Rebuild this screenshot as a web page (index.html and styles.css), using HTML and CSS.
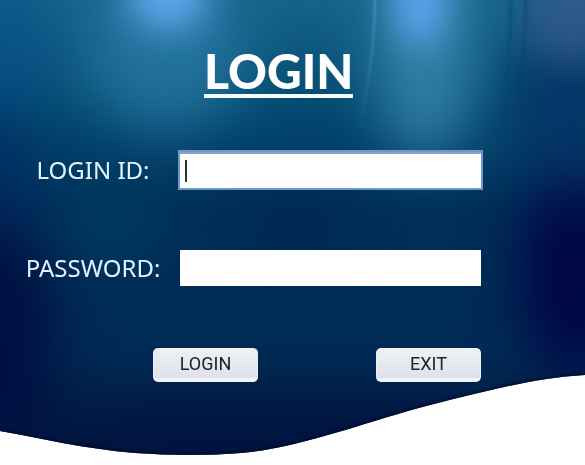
FILE: index.html
```html
<!DOCTYPE html>
<html lang="en">
<head>
<meta charset="utf-8">
<title>Login</title>
<link rel="stylesheet" href="styles.css">
</head>
<body>
<svg class="backdrop" viewBox="0 0 585 465" preserveAspectRatio="none" aria-hidden="true">
  <defs>
    <linearGradient id="base" x1="0" y1="0" x2="0" y2="1">
      <stop offset="0" stop-color="#176389"/>
      <stop offset="0.22" stop-color="#044c72"/>
      <stop offset="0.45" stop-color="#002f59"/>
      <stop offset="0.75" stop-color="#002b55"/>
      <stop offset="1" stop-color="#00173d"/>
    </linearGradient>
    <filter id="soft" x="-150%" y="-150%" width="400%" height="400%" color-interpolation-filters="sRGB"><feGaussianBlur stdDeviation="28"/></filter>
    <filter id="glow" x="-150%" y="-150%" width="400%" height="400%" color-interpolation-filters="sRGB"><feGaussianBlur stdDeviation="18"/></filter>
    <filter id="ray" x="-300%" y="-20%" width="700%" height="140%" color-interpolation-filters="sRGB"><feGaussianBlur stdDeviation="1"/></filter>
    <linearGradient id="fade" x1="0" y1="0" x2="0" y2="1">
      <stop offset="0" stop-color="#73b9d8" stop-opacity="0.5"/>
      <stop offset="1" stop-color="#73b9d8" stop-opacity="0"/>
    </linearGradient>
    <linearGradient id="fold" x1="0" y1="0" x2="0" y2="1">
      <stop offset="0" stop-color="#02395f" stop-opacity="0.35"/>
      <stop offset="1" stop-color="#02395f" stop-opacity="0"/>
    </linearGradient>
    <clipPath id="wave">
      <path d="M0 0H585V375C535 378 490 390 430 405C370 421 320 440 270 449C235 456 180 456 135 453C85 449 40 438 0 431Z"/>
    </clipPath>
  </defs>
  <g clip-path="url(#wave)">
    <rect width="585" height="465" fill="url(#base)"/>
    <g filter="url(#soft)">
      <ellipse cx="165" cy="50" rx="80" ry="80" fill="#2879a5" opacity="0.8"/>
      <ellipse cx="425" cy="60" rx="50" ry="100" fill="#3584a6" opacity="0.9"/>
      <ellipse cx="-10" cy="50" rx="60" ry="70" fill="#07508a" opacity="0.7"/>
      <ellipse cx="-5" cy="180" rx="35" ry="80" fill="#002a62" opacity="0.8"/>
      <ellipse cx="-10" cy="340" rx="65" ry="120" fill="#000f42"/>
      <ellipse cx="575" cy="270" rx="55" ry="110" fill="#000645"/>
      <ellipse cx="575" cy="110" rx="70" ry="80" fill="#043466" opacity="0.9"/>
      <ellipse cx="295" cy="225" rx="55" ry="35" fill="#002254" opacity="0.7"/>
      <ellipse cx="110" cy="220" rx="50" ry="35" fill="#004568" opacity="0.6"/>
      <ellipse cx="280" cy="440" rx="260" ry="32" fill="#00103f" opacity="0.8"/>
    </g>
    <g filter="url(#glow)">
      <ellipse cx="168" cy="-3" rx="40" ry="32" fill="#64aaf0"/>
      <ellipse cx="420" cy="0" rx="26" ry="46" fill="#61aafb" opacity="0.95"/>
      <ellipse cx="572" cy="15" rx="46" ry="50" fill="#345a8c" opacity="0.8"/>
    </g>
    <path filter="url(#ray)" fill="none" stroke="url(#fade)" stroke-width="2" d="M375 0Q374 70 357 135"/>
    <path filter="url(#ray)" fill="none" stroke="url(#fold)" stroke-width="4" d="M526 0Q526 50 514 125M510 0Q512 50 502 125"/>
    <path filter="url(#ray)" fill="none" stroke="#000a2b" stroke-width="4" opacity="0.7" d="M0 431C40 438 85 449 135 453C180 456 235 456 270 449C320 440 370 421 430 405C490 390 535 378 585 375"/>
  </g>
</svg>
<main class="login">
  <h1 class="title">LOGIN</h1>
  <form class="form">
    <div class="row">
      <label class="label" for="login-id">LOGIN ID:</label>
      <div class="field">
        <input class="input input-active" id="login-id" type="text">
        <span class="caret"></span>
      </div>
    </div>
    <div class="row">
      <label class="label" for="password">PASSWORD:</label>
      <div class="field">
        <input class="input" id="password" type="password">
      </div>
    </div>
    <div class="actions">
      <button class="button" type="submit">LOGIN</button>
      <button class="button" type="button">EXIT</button>
    </div>
  </form>
</main>
</body>
</html>
```
FILE: styles.css
```css
* {
  box-sizing: border-box;
}

body {
  margin: 0;
  min-height: 100vh;
  position: relative;
  background: #fff;
  color: #e4f4ff;
  font-family: "Noto Sans", sans-serif;
}

.backdrop {
  position: absolute;
  inset: 0;
  width: 100%;
  height: 100%;
}

.login {
  position: relative;
  padding: 48px 104px 0 24px;
}

.title {
  width: fit-content;
  margin: 0 0 0 180px;
  border-bottom: 4px solid #f4fcff;
  color: #fff;
  font: 900 48px/46px Lato, sans-serif;
}

.form {
  display: flex;
  flex-direction: column;
  gap: 62px;
  margin-top: 54px;
}

.row {
  display: grid;
  grid-template-columns: 138px 1fr;
  gap: 18px;
  align-items: center;
}

.label {
  font-size: 24px;
  line-height: 36px;
  text-align: center;
  white-space: nowrap;
}

.field {
  position: relative;
  display: flex;
}

.input {
  width: 100%;
  height: 36px;
  padding: 0 8px;
  border: 0;
  border-radius: 0;
  background: #fff;
  color: #222;
  font: 20px "Noto Sans", sans-serif;
}

.input-active {
  border-top: 2px solid #8aa6bd;
  outline: 2px solid #6f97c8;
}

.caret {
  position: absolute;
  top: 8px;
  left: 5px;
  width: 2px;
  height: 22px;
  background: #333;
}

.actions {
  display: flex;
  justify-content: space-between;
  margin-left: 129px;
}

.button {
  width: 105px;
  height: 34px;
  padding: 0;
  border: 1px solid #edf0f8;
  border-bottom: 4px solid #f3f4fb;
  border-radius: 5px;
  background: linear-gradient(#eff0f6, #dfe2ea);
  color: #202028;
  font: 18px/28px Roboto, sans-serif;
}
```
